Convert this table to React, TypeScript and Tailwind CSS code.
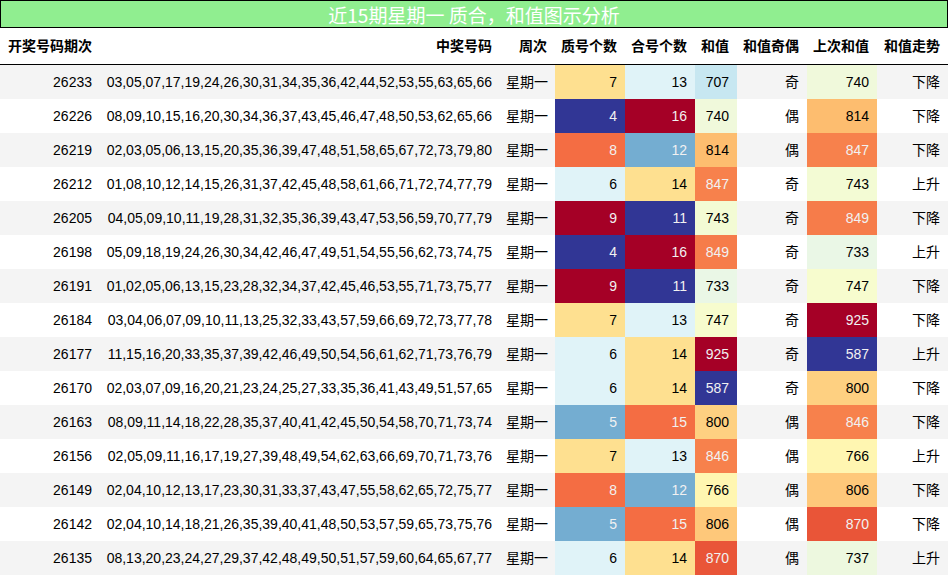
type Row = [number, string, number, number, number, string, number, string]

const rows: Row[] = [
  [26233, "03,05,07,17,19,24,26,30,31,34,35,36,42,44,52,53,55,63,65,66", 7, 13, 707, "奇", 740, "下降"],
  [26226, "08,09,10,15,16,20,30,34,36,37,43,45,46,47,48,50,53,62,65,66", 4, 16, 740, "偶", 814, "下降"],
  [26219, "02,03,05,06,13,15,20,35,36,39,47,48,51,58,65,67,72,73,79,80", 8, 12, 814, "偶", 847, "下降"],
  [26212, "01,08,10,12,14,15,26,31,37,42,45,48,58,61,66,71,72,74,77,79", 6, 14, 847, "奇", 743, "上升"],
  [26205, "04,05,09,10,11,19,28,31,32,35,36,39,43,47,53,56,59,70,77,79", 9, 11, 743, "奇", 849, "下降"],
  [26198, "05,09,18,19,24,26,30,34,42,46,47,49,51,54,55,56,62,73,74,75", 4, 16, 849, "奇", 733, "上升"],
  [26191, "01,02,05,06,13,15,23,28,32,34,37,42,45,46,53,55,71,73,75,77", 9, 11, 733, "奇", 747, "下降"],
  [26184, "03,04,06,07,09,10,11,13,25,32,33,43,57,59,66,69,72,73,77,78", 7, 13, 747, "奇", 925, "下降"],
  [26177, "11,15,16,20,33,35,37,39,42,46,49,50,54,56,61,62,71,73,76,79", 6, 14, 925, "奇", 587, "上升"],
  [26170, "02,03,07,09,16,20,21,23,24,25,27,33,35,36,41,43,49,51,57,65", 6, 14, 587, "奇", 800, "下降"],
  [26163, "08,09,11,14,18,22,28,35,37,40,41,42,45,50,54,58,70,71,73,74", 5, 15, 800, "偶", 846, "下降"],
  [26156, "02,05,09,11,16,17,19,27,39,48,49,54,62,63,66,69,70,71,73,76", 7, 13, 846, "偶", 766, "上升"],
  [26149, "02,04,10,12,13,17,23,30,31,33,37,43,47,55,58,62,65,72,75,77", 8, 12, 766, "偶", 806, "下降"],
  [26142, "02,04,10,14,18,21,26,35,39,40,41,48,50,53,57,59,65,73,75,76", 5, 15, 806, "偶", 870, "下降"],
  [26135, "08,13,20,23,24,27,29,37,42,48,49,50,51,57,59,60,64,65,67,77", 6, 14, 870, "偶", 737, "上升"],
]

// RdYlBu reversed
const stops = [
  "#313695", "#4575b4", "#74add1", "#abd9e9", "#e0f3f8", "#ffffbf",
  "#fee090", "#fdae61", "#f46d43", "#d73027", "#a50026",
].map((h) => [1, 3, 5].map((i) => parseInt(h.slice(i, i + 2), 16)))

function cmap(x: number) {
  // 256-entry lookup like matplotlib
  const idx = Math.min(255, Math.max(0, Math.floor(x * 256)))
  const p = (idx / 255) * 10
  const i = Math.min(9, Math.floor(p))
  const t = p - i
  return stops[i].map((c, k) => c + (stops[i + 1][k] - c) * t)
}

function lum(rgb: number[]) {
  const f = (c: number) => {
    const v = c / 255
    return v <= 0.03928 ? v / 12.92 : Math.pow((v + 0.055) / 1.055, 2.4)
  }
  return 0.2126 * f(rgb[0]) + 0.7152 * f(rgb[1]) + 0.0722 * f(rgb[2])
}

function heat(v: number, min: number, max: number) {
  const rgb = cmap((v - min) / (max - min))
  return {
    backgroundColor: `rgb(${rgb.map((c) => Math.round(c)).join(",")})`,
    color: lum(rgb) < 0.408 ? "#f1f1f1" : "#000000",
  }
}

const range = (k: number) => {
  const vals = rows.map((r) => r[k] as number)
  return [Math.min(...vals), Math.max(...vals)]
}
const r2 = range(2)
const r3 = range(3)
const r4 = range(4)
const r6 = range(6)

const grid = "grid grid-cols-[100px_400px_55px_70px_70px_42px_70px_70px_71px]"
const headers = ["开奖号码期次", "中奖号码", "周次", "质号个数", "合号个数", "和值", "和值奇偶", "上次和值", "和值走势"]

export default function App() {
  return (
    <div className="w-[948px] h-[576px] bg-white text-[14px] text-black font-['Liberation_Sans','Noto_Sans_CJK_SC',sans-serif]">
      <div className="h-[28px] border border-black bg-[#90ee90] flex items-center justify-center text-white text-[19px] font-['Noto_Sans_CJK_SC',sans-serif] leading-none">
        近15期星期一 质合，和值图示分析
      </div>
      <div className={`${grid} h-[37px] border-b border-black font-bold`}>
        {headers.map((h) => (
          <div key={h} className="flex items-center justify-end pr-2">{h}</div>
        ))}
      </div>
      {rows.map((r, i) => (
        <div key={r[0]} className={`${grid} h-[34px] ${i % 2 === 0 ? "bg-[#f4f4f4]" : "bg-white"}`}>
          <div className="flex items-center justify-end pr-2">{r[0]}</div>
          <div className="flex items-center justify-end pr-2">{r[1]}</div>
          <div className="flex items-center justify-end pr-[7px]">星期一</div>
          <div className="flex items-center justify-end pr-2" style={heat(r[2], r2[0], r2[1])}>{r[2]}</div>
          <div className="flex items-center justify-end pr-2" style={heat(r[3], r3[0], r3[1])}>{r[3]}</div>
          <div className="flex items-center justify-end pr-2" style={heat(r[4], r4[0], r4[1])}>{r[4]}</div>
          <div className="flex items-center justify-end pr-2">{r[5]}</div>
          <div className="flex items-center justify-end pr-2" style={heat(r[6], r6[0], r6[1])}>{r[6]}</div>
          <div className="flex items-center justify-end pr-2">{r[7]}</div>
        </div>
      ))}
    </div>
  )
}
